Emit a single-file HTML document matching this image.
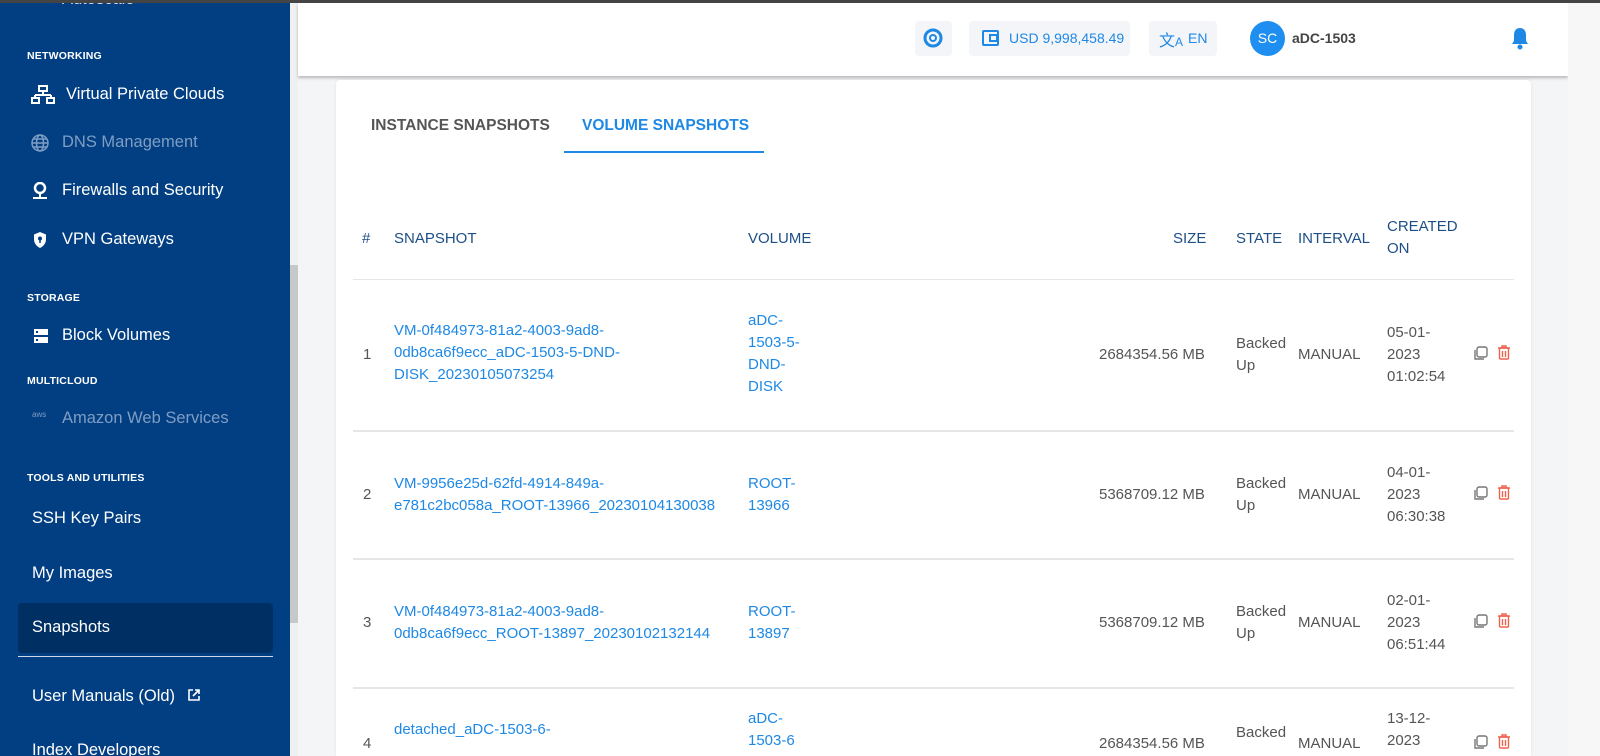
<!DOCTYPE html>
<html style="width:1600px;height:756px;overflow:hidden"><head><meta charset="utf-8"><style>
*{margin:0;padding:0;box-sizing:border-box}
body{width:1600px;height:756px;overflow:hidden;background:#f4f5f7;font-family:"Liberation Sans",sans-serif;position:relative}
.a{position:absolute;white-space:nowrap}
#sb{position:absolute;left:0;top:0;width:290px;height:756px;background:#013f82;color:#fff;overflow:hidden}
.sec{position:absolute;left:27px;font-size:10.5px;font-weight:bold;letter-spacing:.2px}
.it{position:absolute;font-size:16.5px}
.dim{color:#7f9dc4}
.ic{position:absolute}
.tb{font-size:15px;color:#555;line-height:22px}
.lk{color:#1e88e5}
.hd{color:#1d4f86;font-size:15px;line-height:22px}
.hr{position:absolute;left:353px;width:1161px;height:2px;background:#e6e6e6}
</style></head><body>
<div style="position:absolute;left:0;top:0;width:1600px;height:3px;background:#444;z-index:5"></div>
<div id="sb">
 <div class="it" style="left:62px;top:-10px;color:#ddd">Autoscale</div>
 <div class="sec" style="top:50px">NETWORKING</div>
 <svg class="ic" style="left:31px;top:85px" width="24" height="20" viewBox="0 0 24 20" fill="none" stroke="#fff" stroke-width="2"><rect x="8" y="1" width="8" height="5"/><path d="M12 6v4M4 10h16M4 10v3M20 10v3"/><rect x="1" y="13" width="7" height="5"/><rect x="16" y="13" width="7" height="5"/></svg>
 <div class="it" style="left:66px;top:85px">Virtual Private Clouds</div>
 <svg class="ic dim" style="left:31px;top:134px" width="18" height="18" viewBox="0 0 18 18" fill="none" stroke="#7f9dc4" stroke-width="1.5"><circle cx="9" cy="9" r="8"/><ellipse cx="9" cy="9" rx="3.5" ry="8"/><path d="M1 9h16M2.5 5h13M2.5 13h13"/></svg>
 <div class="it dim" style="left:62px;top:133px">DNS Management</div>
 <svg class="ic" style="left:32px;top:182px" width="16" height="18" viewBox="0 0 16 18"><circle cx="8" cy="6" r="5" fill="none" stroke="#fff" stroke-width="2.5"/><path d="M8 11v4M1 16h14" stroke="#fff" stroke-width="2"/></svg>
 <div class="it" style="left:62px;top:181px">Firewalls and Security</div>
 <svg class="ic" style="left:33px;top:231px" width="14" height="18" viewBox="0 0 14 18"><path d="M7 1l6 2.5v5c0 4-3 7-6 8.5C4 15.5 1 12.5 1 8.5v-5z" fill="#fff"/><circle cx="7" cy="7.5" r="2" fill="#013f82"/><path d="M7 8v4" stroke="#013f82" stroke-width="1.5"/></svg>
 <div class="it" style="left:62px;top:230px">VPN Gateways</div>
 <div class="sec" style="top:292px">STORAGE</div>
 <svg class="ic" style="left:34px;top:329px" width="14" height="14" viewBox="0 0 14 14"><rect x="0" y="0" width="14" height="6" fill="#fff"/><rect x="0" y="8" width="14" height="6" fill="#fff"/><rect x="2" y="2" width="2" height="2" fill="#013f82"/><rect x="2" y="10" width="2" height="2" fill="#013f82"/></svg>
 <div class="it" style="left:62px;top:326px">Block Volumes</div>
 <div class="sec" style="top:375px">MULTICLOUD</div>
 <div class="a dim" style="left:32px;top:410px;font-size:8px">aws</div>
 <div class="it dim" style="left:62px;top:409px">Amazon Web Services</div>
 <div class="sec" style="top:472px">TOOLS AND UTILITIES</div>
 <div class="it" style="left:32px;top:509px">SSH Key Pairs</div>
 <div class="it" style="left:32px;top:564px">My Images</div>
 <div style="position:absolute;left:18px;top:603px;width:255px;height:50px;background:#002f63;border-radius:4px"></div>
 <div class="it" style="left:32px;top:618px">Snapshots</div>
 <div style="position:absolute;left:18px;top:656px;width:255px;height:1px;background:#cfd8e6"></div>
 <div class="it" style="left:32px;top:687px">User Manuals (Old)</div>
 <svg class="ic" style="left:188px;top:689px" width="12" height="12" viewBox="0 0 12 12" fill="none" stroke="#fff" stroke-width="1.6"><path d="M5 1H1v10h10V7M7 1h4v4M11 1L5 7"/></svg>
 <div class="it" style="left:32px;top:741px">Index Developers</div>
</div>
<div style="position:absolute;left:290px;top:0;width:8px;height:756px;background:#f0f0f0"></div>
<div style="position:absolute;left:290px;top:265px;width:8px;height:358px;background:#c8c8c8"></div>
<div style="position:absolute;left:298px;top:3px;width:1270px;height:73px;background:#fff;box-shadow:0 2px 3px rgba(0,0,0,.25)"></div>
<div style="position:absolute;left:1568px;top:0;width:32px;height:756px;background:#f7f7f7"></div>
<div style="position:absolute;left:915px;top:21px;width:37px;height:35px;background:#f3f5f8;border-radius:4px"></div>
<svg class="ic" style="left:923px;top:28px" width="20" height="20" viewBox="0 0 20 20"><circle cx="10" cy="10" r="8" fill="none" stroke="#1e88e5" stroke-width="3"/><circle cx="10" cy="10" r="3" fill="none" stroke="#1e88e5" stroke-width="2"/></svg>
<div style="position:absolute;left:969px;top:21px;width:161px;height:35px;background:#f3f5f8;border-radius:4px"></div>
<svg class="ic" style="left:982px;top:29px" width="18" height="18" viewBox="0 0 18 18" fill="none" stroke="#1e88e5" stroke-width="2"><rect x="1" y="2" width="15" height="14" rx="1"/><rect x="8" y="6" width="7" height="6"/></svg>
<div class="a" style="left:1009px;top:30px;font-size:14px;color:#1e88e5">USD 9,998,458.49</div>
<div style="position:absolute;left:1149px;top:21px;width:68px;height:35px;background:#f3f5f8;border-radius:4px"></div>
<div class="a" style="left:1159px;top:27px;font-size:16px;color:#1e88e5">文<span style="font-size:12px">A</span></div>
<div class="a" style="left:1188px;top:30px;font-size:14px;color:#1e88e5">EN</div>
<div style="position:absolute;left:1250px;top:21px;width:35px;height:35px;border-radius:50%;background:#1e8ff0;color:#fff;font-size:14px;text-align:center;line-height:35px">SC</div>
<div class="a" style="left:1292px;top:30px;font-size:14px;font-weight:bold;color:#444">aDC-1503</div>
<svg class="ic" style="left:1510px;top:26px" width="20" height="24" viewBox="0 0 20 24"><path d="M10 2c-4 0-6 3-6 7v6l-2 3h16l-2-3V9c0-4-2-7-6-7z" fill="#1e88e5"/><circle cx="10" cy="21" r="2.5" fill="#1e88e5"/></svg>
<div style="position:absolute;left:336px;top:80px;width:1195px;height:676px;background:#fff;border-radius:4px 4px 0 0;box-shadow:0 0 3px rgba(0,0,0,.08)"></div>
<div class="a" style="left:371px;top:117px;font-size:15.5px;font-weight:bold;color:#555">INSTANCE SNAPSHOTS</div>
<div class="a" style="left:582px;top:117px;font-size:15.5px;font-weight:bold;color:#1e88e5">VOLUME SNAPSHOTS</div>
<div style="position:absolute;left:564px;top:151px;width:200px;height:2px;background:#1e88e5"></div>
<div class="a hd" style="left:362px;top:228px">#</div>
<div class="a hd" style="left:394px;top:228px">SNAPSHOT</div>
<div class="a hd" style="left:748px;top:228px">VOLUME</div>
<div class="a hd" style="left:1173px;top:228px">SIZE</div>
<div class="a hd" style="left:1236px;top:228px">STATE</div>
<div class="a hd" style="left:1298px;top:228px">INTERVAL</div>
<div class="a hd" style="left:1387px;top:216px">CREATED<br>ON</div>
<div class="hr" style="top:279px;height:1px"></div>

<div class="a tb" style="left:363px;top:344px">1</div>
<div class="a tb lk" style="left:394px;top:320px">VM-0f484973-81a2-4003-9ad8-<br>0db8ca6f9ecc_aDC-1503-5-DND-<br>DISK_20230105073254</div>
<div class="a tb lk" style="left:748px;top:310px">aDC-<br>1503-5-<br>DND-<br>DISK</div>
<div class="a tb" style="left:1099px;top:344px">2684354.56 MB</div>
<div class="a tb" style="left:1236px;top:333px">Backed<br>Up</div>
<div class="a tb" style="left:1298px;top:344px">MANUAL</div>
<div class="a tb" style="left:1387px;top:322px">05-01-<br>2023<br>01:02:54</div>
<div class="hr" style="top:430px"></div>

<div class="a tb" style="left:363px;top:484px">2</div>
<div class="a tb lk" style="left:394px;top:473px">VM-9956e25d-62fd-4914-849a-<br>e781c2bc058a_ROOT-13966_20230104130038</div>
<div class="a tb lk" style="left:748px;top:473px">ROOT-<br>13966</div>
<div class="a tb" style="left:1099px;top:484px">5368709.12 MB</div>
<div class="a tb" style="left:1236px;top:473px">Backed<br>Up</div>
<div class="a tb" style="left:1298px;top:484px">MANUAL</div>
<div class="a tb" style="left:1387px;top:462px">04-01-<br>2023<br>06:30:38</div>
<div class="hr" style="top:558px"></div>

<div class="a tb" style="left:363px;top:612px">3</div>
<div class="a tb lk" style="left:394px;top:601px">VM-0f484973-81a2-4003-9ad8-<br>0db8ca6f9ecc_ROOT-13897_20230102132144</div>
<div class="a tb lk" style="left:748px;top:601px">ROOT-<br>13897</div>
<div class="a tb" style="left:1099px;top:612px">5368709.12 MB</div>
<div class="a tb" style="left:1236px;top:601px">Backed<br>Up</div>
<div class="a tb" style="left:1298px;top:612px">MANUAL</div>
<div class="a tb" style="left:1387px;top:590px">02-01-<br>2023<br>06:51:44</div>
<div class="hr" style="top:687px"></div>

<div class="a tb" style="left:363px;top:733px">4</div>
<div class="a tb lk" style="left:394px;top:719px">detached_aDC-1503-6-</div>
<div class="a tb lk" style="left:748px;top:708px">aDC-<br>1503-6</div>
<div class="a tb" style="left:1099px;top:733px">2684354.56 MB</div>
<div class="a tb" style="left:1236px;top:722px">Backed</div>
<div class="a tb" style="left:1298px;top:733px">MANUAL</div>
<div class="a tb" style="left:1387px;top:708px">13-12-<br>2023</div>

<svg width="0" height="0" style="position:absolute"><defs>
<g id="cp"><rect x="4" y="1" width="10" height="10" rx="2" fill="none" stroke="#777" stroke-width="1.4"/><path d="M2 4v9h9" fill="none" stroke="#777" stroke-width="1.4"/></g>
<g id="tr" fill="none" stroke="#f0624d" stroke-width="1.4"><path d="M1 3h12M5 3V1h4v2"/><rect x="2.5" y="3" width="9" height="11" rx="1"/><path d="M5.5 6v6M8.5 6v6"/></g>
</defs></svg>
<svg class="ic" style="left:1473px;top:346px" width="16" height="16"><use href="#cp"/></svg>
<svg class="ic" style="left:1497px;top:345px" width="15" height="16"><use href="#tr"/></svg>
<svg class="ic" style="left:1473px;top:486px" width="16" height="16"><use href="#cp"/></svg>
<svg class="ic" style="left:1497px;top:485px" width="15" height="16"><use href="#tr"/></svg>
<svg class="ic" style="left:1473px;top:614px" width="16" height="16"><use href="#cp"/></svg>
<svg class="ic" style="left:1497px;top:613px" width="15" height="16"><use href="#tr"/></svg>
<svg class="ic" style="left:1473px;top:735px" width="16" height="16"><use href="#cp"/></svg>
<svg class="ic" style="left:1497px;top:734px" width="15" height="16"><use href="#tr"/></svg>
</body></html>
